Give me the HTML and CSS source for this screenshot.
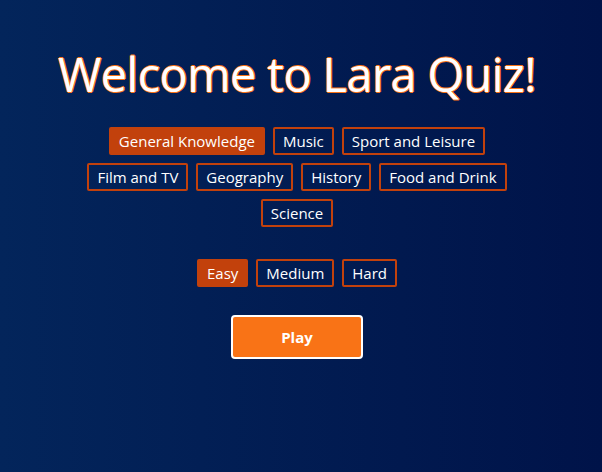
FILE: index.html
```html
<!DOCTYPE html>
<html>
<head>
<meta charset="utf-8">
<link rel="stylesheet" href="styles.css">
</head>
<body>
<main class="quiz">
  <h1 class="title">Welcome to Lara Quiz!</h1>
  <div class="chips categories">
    <button class="chip active">General Knowledge</button>
    <button class="chip">Music</button>
    <button class="chip">Sport and Leisure</button>
    <button class="chip">Film and TV</button>
    <button class="chip">Geography</button>
    <button class="chip">History</button>
    <button class="chip">Food and Drink</button>
    <button class="chip">Science</button>
  </div>
  <div class="chips difficulty">
    <button class="chip active">Easy</button>
    <button class="chip">Medium</button>
    <button class="chip">Hard</button>
  </div>
  <button class="play">Play</button>
</main>
</body>
</html>
```
FILE: styles.css
```css
html, body {
  margin: 0;
  height: 100%;
}
body {
  background: linear-gradient(to right, #03255b, #001349);
  font-family: "Open Sans", "Noto Sans", sans-serif;
  color: #fff;
}
.quiz {
  display: flex;
  flex-direction: column;
  align-items: center;
  padding: 44px 8px 0 0;
}
.title {
  margin: 0;
  font-size: 47px;
  font-weight: 400;
  line-height: 60px;
  color: #fff;
  letter-spacing: -0.65px;
  text-shadow: 1px 0 0 #f97316, -1px 0 0 #f97316, 0 1px 0 #f97316, 0 -1px 0 #f97316;
}
.chips {
  display: flex;
  flex-wrap: wrap;
  justify-content: center;
  gap: 8px;
}
.categories {
  margin-top: 23px;
  width: 440px;
}
.difficulty {
  margin-top: 32px;
}
.chip {
  font-family: inherit;
  font-size: 15px;
  color: #fff;
  background: transparent;
  border: 2px solid #c2410c;
  border-radius: 2px;
  height: 28px;
  padding: 0 8px;
  line-height: 24px;
}
.chip.active {
  background: #c2410c;
}
.play {
  margin-top: 28px;
  width: 132px;
  height: 44px;
  background: #f97316;
  border: 2px solid #fff;
  border-radius: 4px;
  color: #fff;
  font-family: inherit;
  font-size: 15px;
  font-weight: 700;
}
```
